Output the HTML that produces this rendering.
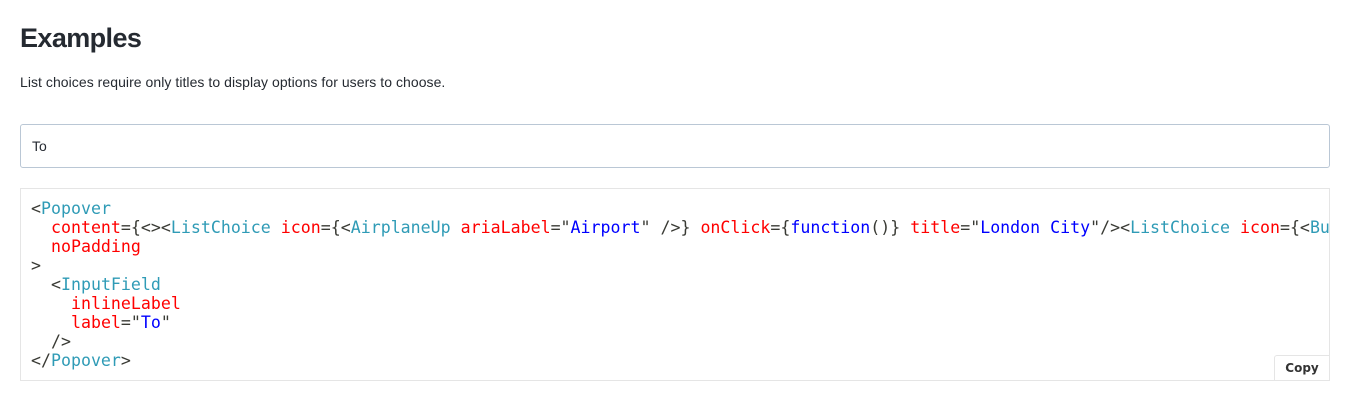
<!DOCTYPE html>
<html><head><style>
body{margin:0;background:#fff;width:1350px;height:401px;overflow:hidden;font-family:"Liberation Sans",sans-serif;color:#252a31}
h1{position:absolute;left:20px;top:18px;margin:0;font-size:27px;font-weight:bold;line-height:40px;letter-spacing:-0.6px}
p{position:absolute;left:20px;top:73px;margin:0;font-size:14px;line-height:18px;letter-spacing:0.05px}
.inp{position:absolute;left:20px;top:124px;width:1308px;height:42px;border:1px solid #bac7d5;border-radius:3px;box-sizing:content-box}
.inp span{position:absolute;left:11px;top:13px;font-size:14px}
.code{position:absolute;left:20px;top:188px;width:1308px;height:191px;border:1px solid #e5e5e5;overflow:hidden}
pre{margin:0;position:absolute;left:10px;top:10px;font-family:"DejaVu Sans Mono",monospace;font-size:16.6px;line-height:19px;color:#393a34;white-space:pre}
.t{color:#2f9bb6}.a{color:#f00}.s{color:#00f}
.copy{position:absolute;right:0;bottom:0;width:54px;height:24px;border:1px solid #e5e5e5;border-right:0;border-bottom:0;border-top-left-radius:3px;background:#fff;font-family:"DejaVu Sans",sans-serif;font-weight:bold;font-size:12px;color:#333;text-align:center;line-height:24px}
</style></head><body>
<h1>Examples</h1>
<p>List choices require only titles to display options for users to choose.</p>
<div class="inp"><span>To</span></div>
<div class="code"><pre>&lt;<span class="t">Popover</span>
  <span class="a">content</span>={&lt;&gt;&lt;<span class="t">ListChoice</span> <span class="a">icon</span>={&lt;<span class="t">AirplaneUp</span> <span class="a">ariaLabel</span>="<span class="s">Airport</span>" /&gt;} <span class="a">onClick</span>={<span class="s">function</span>()} <span class="a">title</span>="<span class="s">London City</span>"/&gt;&lt;<span class="t">ListChoice</span> <span class="a">icon</span>={&lt;<span class="t">BusStop</span> ariaLabel="Bus"
  <span class="a">noPadding</span>
&gt;
  &lt;<span class="t">InputField</span>
    <span class="a">inlineLabel</span>
    <span class="a">label</span>="<span class="s">To</span>"
  /&gt;
&lt;/<span class="t">Popover</span>&gt;</pre><div class="copy">Copy</div></div>
</body></html>
